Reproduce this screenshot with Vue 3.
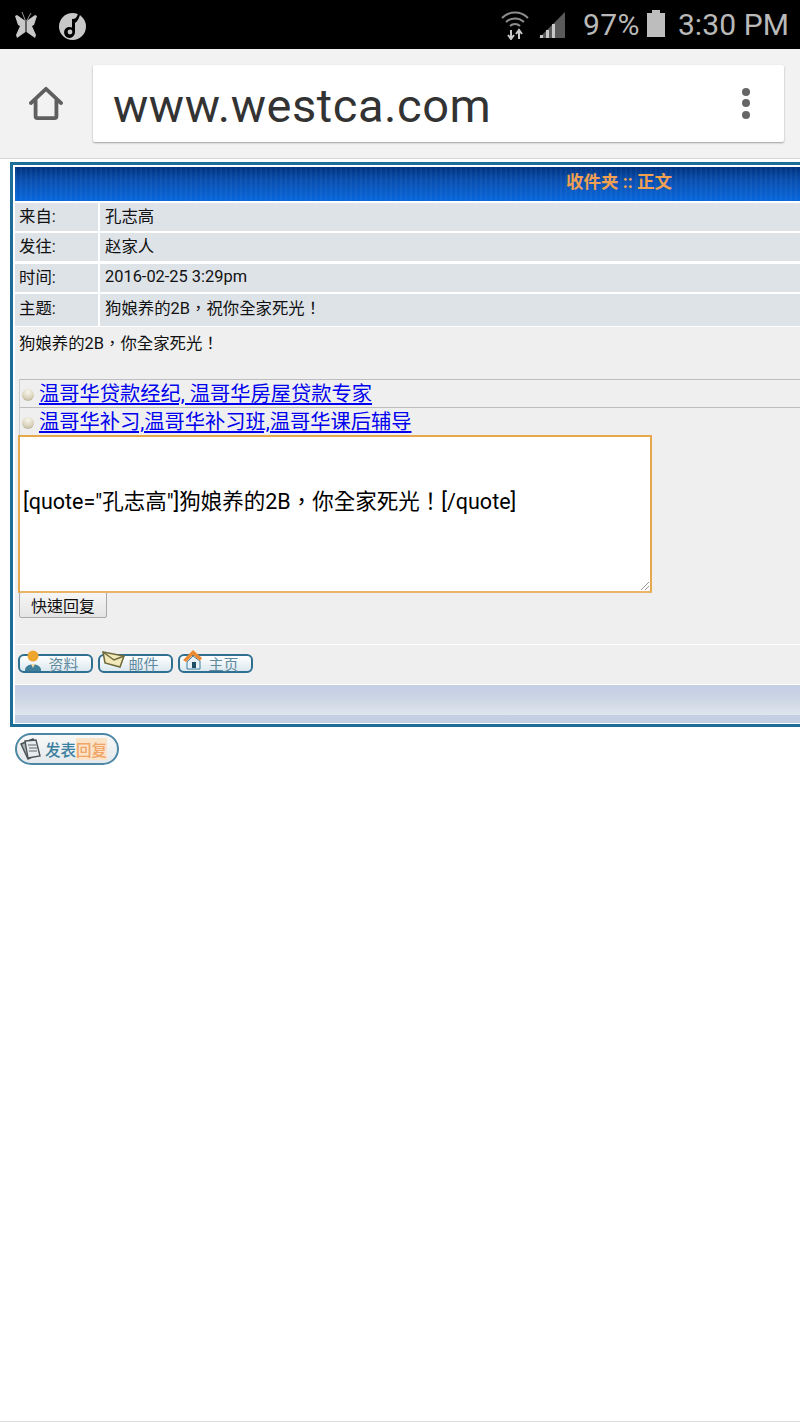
<template>
  <div class="page">
    <div class="status_bar">
      <svg class="st_icon" width="24" height="30" viewBox="0 0 24 30">
        <path d="M11.5 11 L3 5 L1 6 L4 15 L6 16 L2 25 L3 28 L11.5 22 Z M12.5 11 L21 5 L23 6 L20 15 L18 16 L22 25 L21 28 L12.5 22 Z" fill="#c8c8c8"/>
        <path d="M11.5 11 L8 2 M12.5 11 L17 3" stroke="#9a9a9a" stroke-width="1" fill="none"/>
      </svg>
      <svg class="note" width="30" height="32" viewBox="0 0 30 32">
        <circle cx="14.5" cy="17.5" r="13.5" fill="#c8c8c8"/>
        <path d="M15 10 C18 10 20 7 20.5 1 L22.5 2 C22 8 20 12 17 14 V23 A5.5 5.5 0 1 1 14 18.5 V10 Z" fill="#000"/>
        <circle cx="12" cy="23" r="2.4" fill="#c8c8c8"/>
      </svg>
      <div class="st_right">
        <svg width="28" height="30" viewBox="0 0 28 30">
          <path d="M1 8 A18 18 0 0 1 27 8 M5 12 A13 13 0 0 1 23 12 M9 16 A7 7 0 0 1 19 16" fill="none" stroke="#8d8d8d" stroke-width="2"/>
          <path d="M10 20 V29 M7 25 L10 29 L13 25" fill="none" stroke="#c8c8c8" stroke-width="2"/>
          <path d="M18 29 V20 M15 24 L18 20 L21 24" fill="none" stroke="#c8c8c8" stroke-width="2"/>
        </svg>
        <svg class="signal" width="26" height="26" viewBox="0 0 26 26">
          <path d="M26 0 V26 H0 Z" fill="#5a5a5a"/>
          <path d="M1 23 h3 v3 h-3 Z M7 18 h3 v8 h-3 Z M13 12 h3 v14 h-3 Z" fill="#c8c8c8"/>
        </svg>
        <span class="pct">97%</span>
        <svg class="batt" width="18" height="27" viewBox="0 0 18 27">
          <path d="M5 0 H13 V3 H18 V27 H0 V3 H5 Z" fill="#bdbdbd"/>
        </svg>
        <span class="clock">3:30 PM</span>
      </div>
    </div>

    <div class="toolbar">
      <svg class="home" width="36" height="36" viewBox="0 0 38 38">
        <path d="M3 18 L19 3 L35 18 M8 14 V32 A2 2 0 0 0 10 34 H28 A2 2 0 0 0 30 32 V14" fill="none" stroke="#5f5f5f" stroke-width="4" stroke-linecap="round" stroke-linejoin="round"/>
      </svg>
      <div class="url_box">
        <span class="url">www.westca.com</span>
        <div class="dots"><i></i><i></i><i></i></div>
      </div>
    </div>

    <div class="forum">
      <div class="main_table">
        <div class="title_row">收件夹 :: 正文</div>
        <div class="info_row" v-for="row in infoRows" :key="row[0]" :class="row[2]">
          <div class="info_key">{{ row[0] }}</div>
          <div class="info_val">{{ row[1] }}</div>
        </div>

        <div class="body_area">
          <div class="msg">狗娘养的2B，你全家死光！</div>
          <div class="ad_row" v-for="ad in ads" :key="ad">
            <span class="ball"></span><a href="#" class="ad_link">{{ ad }}</a>
          </div>
          <div class="reply_box">
            <div class="reply_text">[quote="孔志高"]狗娘养的2B，你全家死光！[/quote]</div>
            <svg class="grip" width="8" height="8" viewBox="0 0 8 8">
              <path d="M0 8 L8 0 M4 8 L8 4" stroke="#999" stroke-width="1"/>
            </svg>
          </div>
          <button class="quick_btn">快速回复</button>
        </div>

        <div class="profile_row">
          <div class="pill">
            <svg class="pill_icon" width="22" height="24" viewBox="0 0 22 24">
              <circle cx="11" cy="7" r="5.5" fill="#eda52e"/>
              <path d="M3 22 C2 13 20 13 19 22 Z" fill="#3f7f9c"/>
              <path d="M9 15 L11 19 L13 15 Z" fill="#f4d9a0"/>
            </svg>
            <span>资料</span>
          </div>
          <div class="pill">
            <svg class="pill_icon" width="24" height="20" viewBox="0 0 24 20">
              <path d="M1 3 L22 7 L18 18 L3 14 Z" fill="#f2e8b8" stroke="#6d6a3c" stroke-width="1.5"/>
              <path d="M1 3 L12 11 L22 7" fill="none" stroke="#6d6a3c" stroke-width="1.5"/>
            </svg>
            <span>邮件</span>
          </div>
          <div class="pill">
            <svg class="pill_icon" width="22" height="22" viewBox="0 0 22 22">
              <path d="M5 13 L11 7 L18 12 V20 H5 Z" fill="#e8f2f6" stroke="#3f7f9c"/>
              <path d="M1 11 L11 1 L20 9 L18 12 L11 6 L4 13 Z" fill="#ec8a34"/>
              <rect x="10" y="13" width="4" height="6" fill="#1f4d63"/>
            </svg>
            <span>主页</span>
          </div>
        </div>
        <div class="foot_row"></div>
      </div>

      <div class="post_btn">
        <svg width="24" height="24" viewBox="0 0 24 24">
          <path d="M2 7 L14 2 L20 17 L9 22 Z" fill="#aab2b6" stroke="#4b5358" stroke-width="1.4"/>
          <path d="M6 4 L17 3 L21 19 L9 21 Z" fill="#e8ecee" stroke="#4b5358" stroke-width="1.4"/>
          <path d="M9 8 H17 M10 11 H18 M10 14 H18" stroke="#5d666b" stroke-width="1.2"/>
        </svg>
        <span class="post_a">发表</span><span class="post_b">回复</span>
      </div>
    </div>
  </div>
</template>

<script setup>
const infoRows = [
  ["来自:", "孔志高", "h28"],
  ["发往:", "赵家人", "h28"],
  ["时间:", "2016-02-25 3:29pm", "h29"],
  ["主题:", "狗娘养的2B，祝你全家死光！", "h32"],
];
const ads = ["温哥华贷款经纪, 温哥华房屋贷款专家", "温哥华补习,温哥华补习班,温哥华课后辅导"];
</script>

<style>
html, body {
  margin: 0;
  background: #fff;
}
</style>

<style scoped>
.page {
  width: 800px;
  height: 1422px;
  overflow: hidden;
  background: #fff;
  font-family: Roboto, "Noto Sans CJK TC", sans-serif;
  border-bottom: 1px solid #ddd;
  box-sizing: border-box;
}
.status_bar {
  height: 49px;
  background: #000;
  display: flex;
  align-items: center;
  padding-left: 14px;
  padding-right: 11px;
  box-sizing: border-box;
}
.note {
  margin-left: 20px;
}
.st_right {
  margin-left: auto;
  display: flex;
  align-items: center;
  color: #b9b9b9;
  font-size: 30px;
}
.signal {
  margin-left: 10px;
}
.pct {
  margin-left: 18px;
  letter-spacing: 0.4px;
}
.batt {
  margin-left: 7px;
  margin-bottom: 3px;
}
.clock {
  margin-left: 13px;
  letter-spacing: 0.1px;
}
.toolbar {
  height: 110px;
  background: #f2f2f2;
  border-bottom: 1px solid #d4d4d4;
  box-sizing: border-box;
  display: flex;
  align-items: center;
  padding-left: 28px;
  padding-bottom: 16px;
  padding-top: 16px;
}
.home {
  flex: none;
}
.url_box {
  margin-left: 29px;
  width: 691px;
  height: 77px;
  background: #fff;
  border-radius: 2px;
  box-shadow: 0 1px 2px rgba(0, 0, 0, 0.35);
  display: flex;
  align-items: center;
  justify-content: space-between;
  padding-left: 20px;
  padding-right: 34px;
  box-sizing: border-box;
}
.url {
  font-size: 47px;
  color: #333;
  letter-spacing: 0.55px;
  margin-top: 3px;
}
.dots {
  display: flex;
  flex-direction: column;
  gap: 3.5px;
  margin-top: -1px;
}
.dots i {
  display: block;
  width: 8px;
  height: 8px;
  border-radius: 50%;
  background: #666;
}
.forum {
  padding-top: 3px;
  padding-left: 10px;
}
.main_table {
  width: 1216px;
  border: 3px solid #1c6e99;
  padding: 2px 0 1px 2px;
  background: #fff;
  box-sizing: border-box;
}
.title_row {
  height: 34px;
  line-height: 31px;
  text-align: center;
  font-size: 17.5px;
  font-weight: 700;
  color: #f0a050;
  margin-bottom: 2px;
  background:
    repeating-linear-gradient(90deg, rgba(255, 255, 255, 0.04) 0 2px, transparent 2px 5px),
    linear-gradient(#00337f 0, #0a4fb0 40%, #0767dc 100%);
}
.info_row {
  display: flex;
  font-size: 16.4px;
  color: #111;
  margin-bottom: 2px;
}
.h28 {
  height: 28px;
}
.h29 {
  height: 29px;
  padding-top: 1px;
  box-sizing: border-box;
}
.h32 {
  height: 32px;
  margin-bottom: 1px;
}
.info_key {
  width: 83px;
  margin-right: 2px;
  padding-left: 4px;
  padding-bottom: 4px;
  box-sizing: border-box;
  background: #dee3e8;
  display: flex;
  align-items: center;
}
.info_val {
  flex: 1;
  padding-left: 5px;
  padding-bottom: 4px;
  background: #dee3e8;
  display: flex;
  align-items: center;
}
.h32 .info_key,
.h32 .info_val {
  padding-bottom: 6px;
}
.body_area {
  height: 317px;
  background: #efefef;
  padding-left: 3px;
  box-sizing: border-box;
}
.msg {
  height: 52px;
  padding-left: 1px;
  line-height: 34px;
  font-size: 16.4px;
  color: #111;
}
.ad_row {
  height: 28px;
  margin-left: 1px;
  border-top: 1px solid #bdbdbd;
  border-left: 1px solid #ccc;
  box-sizing: border-box;
  display: flex;
  align-items: center;
}
.ball {
  width: 12px;
  height: 12px;
  margin-left: 2px;
  margin-right: 5px;
  margin-top: 2px;
  border-radius: 50%;
  background: radial-gradient(circle at 50% 25%, #f8f6ee 0, #dcd4bc 55%, #aaa48e 100%);
  flex: none;
}
.ad_link {
  font-size: 20.25px;
  line-height: 26px;
  color: #0000ee;
  text-decoration: underline;
  white-space: nowrap;
}
.reply_box {
  position: relative;
  width: 634px;
  height: 158px;
  background: #fff;
  border: 2px solid #e5a84c;
  border-bottom-color: #e8b468;
  box-sizing: border-box;
  padding-left: 3px;
  padding-top: 47px;
  font-size: 21.5px;
  color: #000;
}
.reply_text {
  white-space: nowrap;
}
.grip {
  position: absolute;
  right: 1px;
  bottom: 1px;
}
.quick_btn {
  display: block;
  width: 88px;
  height: 26px;
  margin-left: 1px;
  margin-top: -1px;
  padding: 0 0 4px;
  background: linear-gradient(#f6f6f6, #e4e4e4);
  border: 1px solid #a9a9a9;
  border-radius: 2px;
  font-family: Roboto, "Noto Sans CJK TC", sans-serif;
  font-size: 16px;
  color: #111;
}
.profile_row {
  height: 39px;
  margin-top: 1px;
  margin-bottom: 1px;
  background: #efefef;
  display: flex;
  align-items: center;
  gap: 5px;
  padding-left: 3px;
  padding-bottom: 3px;
  box-sizing: border-box;
}
.pill {
  position: relative;
  width: 75px;
  height: 19px;
  border: 2px solid #2f6f90;
  border-radius: 6px;
  box-sizing: border-box;
  background: linear-gradient(#fff, #dbe8ef);
  display: flex;
  align-items: center;
  justify-content: center;
  font-size: 15px;
  color: #5f8a9e;
  padding-left: 16px;
}
.pill_icon {
  position: absolute;
  left: 2px;
  top: -7px;
}
.foot_row {
  height: 38px;
  background: linear-gradient(#c3cee4 0, #cdd6e4 40%, #e0e6ef 78%, #c5cfe4 80%, #c5cfe4 100%);
}
.post_btn {
  width: 104px;
  height: 32px;
  margin-top: 6px;
  margin-left: 5px;
  border: 2px solid #4e87a5;
  border-radius: 16px;
  box-sizing: border-box;
  background: linear-gradient(#f8f8f8, #e3e9ec);
  display: flex;
  align-items: center;
  padding-left: 2px;
  font-size: 15.5px;
  font-weight: 500;
}
.post_a {
  color: #3d7f9f;
  margin-left: 2px;
}
.post_b {
  color: #f0a468;
  background: #fbe3c8;
}
</style>
